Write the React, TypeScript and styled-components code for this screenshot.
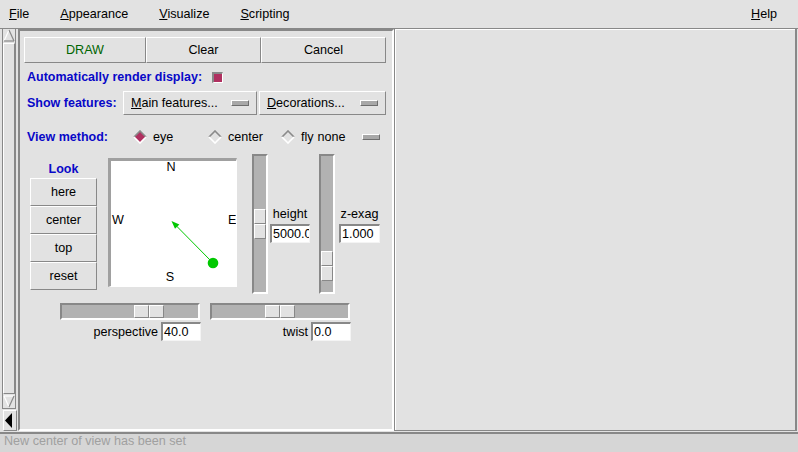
import React from "react";
import styled, { createGlobalStyle } from "styled-components";

const C = {
  bg: "#e2e2e2",
  dark: "#888888",
  light: "#ffffff",
  trough: "#b2b2b2",
  blue: "#0808c8",
  green: "#006400",
  select: "#b03060",
  status: "#d6d6d6",
  statusText: "#a0a0a0",
};

const Global = createGlobalStyle`
  *, *::before, *::after { box-sizing: border-box; }
  html, body { margin: 0; padding: 0; background: ${C.bg}; }
  body {
    font-family: "Liberation Sans", Arial, sans-serif;
    font-size: 12.6px;
    color: #000;
  }
`;

const Window = styled.div`
  width: 798px;
  height: 452px;
  display: flex;
  flex-direction: column;
  background: ${C.bg};
  overflow: hidden;
`;

const MenuBar = styled.div`
  height: 29px;
  flex: none;
  display: flex;
  align-items: center;
  border-bottom: 1px solid ${C.dark};
  padding: 0 21px 0 9px;
`;

const MenuItem = styled.span<{ $right?: boolean }>`
  margin-right: ${(p) => (p.$right ? "0" : "31px")};
  margin-left: ${(p) => (p.$right ? "auto" : "0")};
  white-space: nowrap;
`;

const Main = styled.div`
  height: 405px;
  flex: none;
  display: flex;
  border-bottom: 2px solid ${C.dark};
`;

const ScrollCol = styled.div`
  width: 18px;
  flex: none;
  display: flex;
  flex-direction: column;
`;

const Scrollbar = styled.div`
  width: 14px;
  height: 380px;
  margin-left: 2px;
  display: flex;
  flex-direction: column;
  border-left: 1px solid ${C.dark};
  border-right: 1px solid ${C.dark};
  border-bottom: 1px solid ${C.dark};
`;

const ScrollThumb = styled.div`
  flex: 1;
  margin: 1px 0;
  border-top: 1px solid ${C.light};
  border-left: 1px solid ${C.light};
  border-bottom: 1px solid ${C.dark};
  border-right: 1px solid ${C.dark};
`;

const ArrowBox = styled.div`
  height: 13px;
  display: flex;
  justify-content: center;
`;

const HideButton = styled.div`
  width: 14px;
  height: 21px;
  margin: 1px 0 0 3px;
  border-top: 1px solid ${C.light};
  border-left: 1px solid ${C.light};
  border-bottom: 1px solid ${C.dark};
  border-right: 1px solid ${C.dark};
  display: flex;
  align-items: center;
`;

const LeftPanel = styled.div`
  width: 376px;
  height: 402px;
  flex: none;
  display: flex;
  flex-direction: column;
  border-top: 2px solid ${C.dark};
  border-left: 2px solid ${C.dark};
  border-bottom: 2px solid ${C.light};
  border-right: 2px solid ${C.light};
`;

const RightPanel = styled.div`
  width: 403px;
  height: 402px;
  flex: none;
  border-left: 1px solid ${C.dark};
  border-right: 2px solid ${C.dark};
  border-bottom: 1px solid ${C.dark};
  box-shadow: inset 1px 1px 0 ${C.light};
`;

const ButtonRow = styled.div`
  display: flex;
  height: 26px;
  margin: 6px 0 0 4px;
`;

const PushButton = styled.div<{ $w: number; $color?: string }>`
  width: ${(p) => p.$w}px;
  height: 100%;
  display: flex;
  align-items: center;
  justify-content: center;
  color: ${(p) => p.$color || "#000"};
  border-top: 1px solid ${C.light};
  border-left: 1px solid ${C.light};
  border-bottom: 1px solid ${C.dark};
  border-right: 1px solid ${C.dark};
`;

const Row = styled.div<{ $h: number; $mt?: number }>`
  display: flex;
  align-items: center;
  height: ${(p) => p.$h}px;
  margin: ${(p) => p.$mt || 0}px 0 0 7px;
`;

const BlueLabel = styled.span<{ $w?: number }>`
  color: ${C.blue};
  font-weight: bold;
  font-size: 12.5px;
  white-space: nowrap;
  ${(p) => (p.$w ? `width: ${p.$w}px; flex: none;` : "")}
`;

const CheckBox = styled.span`
  width: 11px;
  height: 11px;
  margin-left: 10px;
  margin-top: 1px;
  background: ${C.select};
  border-top: 2px solid ${C.dark};
  border-left: 2px solid ${C.dark};
  border-bottom: 1px solid ${C.light};
  border-right: 1px solid ${C.light};
`;

const MenuButton = styled.div<{ $w: number; $ml?: number }>`
  width: ${(p) => p.$w}px;
  height: 24px;
  margin-left: ${(p) => p.$ml || 0}px;
  display: flex;
  align-items: center;
  justify-content: space-between;
  padding: 0 7px;
  border-top: 1px solid ${C.light};
  border-left: 1px solid ${C.light};
  border-bottom: 1px solid ${C.dark};
  border-right: 1px solid ${C.dark};
  white-space: nowrap;
`;

const Indicator = styled.span<{ $ml?: number }>`
  width: 18px;
  height: 6px;
  flex: none;
  margin-left: ${(p) => p.$ml || 0}px;
  background: #a8a8a8;
  border-top: 1px solid ${C.light};
  border-left: 1px solid ${C.light};
  border-bottom: 1px solid #6e6e6e;
  border-right: 1px solid #6e6e6e;
`;

const Radio = styled.label<{ $w?: number }>`
  display: flex;
  align-items: center;
  gap: 6px;
  ${(p) => (p.$w ? `width: ${p.$w}px;` : "")}
  flex: none;
  white-space: nowrap;
`;

const Plain = styled.span<{ $ml?: number }>`
  margin-left: ${(p) => p.$ml || 0}px;
  white-space: nowrap;
`;

const MainArea = styled.div`
  display: flex;
  align-items: flex-start;
  height: 141px;
  margin-top: 2px;
  padding-left: 10px;
`;

const LookCol = styled.div`
  width: 67px;
  margin-top: 5px;
  display: flex;
  flex-direction: column;
`;

const LookTitle = styled.div`
  height: 19px;
  display: flex;
  align-items: center;
  justify-content: center;
  color: ${C.blue};
  font-weight: bold;
  font-size: 12.5px;
`;

const LookButton = styled.div`
  height: 28px;
  display: flex;
  align-items: center;
  justify-content: center;
  border-top: 1px solid ${C.light};
  border-left: 1px solid ${C.light};
  border-bottom: 1px solid ${C.dark};
  border-right: 1px solid ${C.dark};
`;

const Compass = styled.div`
  width: 129px;
  height: 129px;
  margin: 4px 0 0 11px;
  background: #fff;
  border-top: 3px solid #a0a0a0;
  border-left: 3px solid #a0a0a0;
  border-bottom: 1px solid #fff;
  border-right: 1px solid #fff;
`;

const VTrough = styled.div<{ $ml: number }>`
  width: 16px;
  height: 140px;
  margin-left: ${(p) => p.$ml}px;
  flex: none;
  background: ${C.trough};
  border-top: 2px solid ${C.dark};
  border-left: 2px solid ${C.dark};
  border-bottom: 2px solid ${C.light};
  border-right: 2px solid ${C.light};
  display: flex;
  flex-direction: column;
`;

const HTrough = styled.div`
  width: 140px;
  height: 17px;
  background: ${C.trough};
  border-top: 2px solid ${C.dark};
  border-left: 2px solid ${C.dark};
  border-bottom: 2px solid ${C.light};
  border-right: 2px solid ${C.light};
  display: flex;
`;

const ThumbHalf = styled.div<{ $vertical?: boolean }>`
  ${(p) => (p.$vertical ? "height: 15px; width: 100%;" : "width: 15px; height: 100%;")}
  background: ${C.bg};
  border-top: 1px solid ${C.light};
  border-left: 1px solid ${C.light};
  border-bottom: 1px solid ${C.dark};
  border-right: 1px solid ${C.dark};
  flex: none;
`;

const VThumb = styled.div<{ $pos: number }>`
  margin-top: ${(p) => p.$pos}px;
  display: flex;
  flex-direction: column;
`;

const HThumb = styled.div<{ $pos: number }>`
  margin-left: ${(p) => p.$pos}px;
  display: flex;
`;

const ValueCol = styled.div<{ $ml: number; $w: number }>`
  width: ${(p) => p.$w}px;
  margin: 52px 0 0 ${(p) => p.$ml}px;
  display: flex;
  flex-direction: column;
  align-items: center;
`;

const ValueLabel = styled.div`
  height: 16px;
  line-height: 16px;
  margin-bottom: 2px;
  white-space: nowrap;
`;

const Entry = styled.div<{ $w: number }>`
  width: ${(p) => p.$w}px;
  height: 19px;
  flex: none;
  background: #fff;
  border-top: 2px solid ${C.dark};
  border-left: 2px solid ${C.dark};
  border-bottom: 1px solid #f4f4f4;
  border-right: 1px solid #f4f4f4;
  padding-left: 1px;
  line-height: 16px;
  white-space: nowrap;
  overflow: hidden;
`;

const BottomArea = styled.div`
  display: flex;
  gap: 9px;
  margin-top: 8px;
  padding-left: 40px;
`;

const SliderCol = styled.div`
  width: 141px;
  display: flex;
  flex-direction: column;
`;

const SliderLabelRow = styled.div`
  display: flex;
  justify-content: flex-end;
  align-items: center;
  gap: 3px;
  margin-top: 2px;
`;

const StatusBar = styled.div`
  flex: 1;
  background: ${C.status};
  color: ${C.statusText};
  padding-left: 4px;
  line-height: 15px;
  white-space: nowrap;
`;

function Diamond({ on }: { on?: boolean }) {
  return (
    <svg width="14" height="14" viewBox="0 0 14 14">
      <polygon points="7,1 13,7 7,13 1,7" fill={on ? C.select : C.bg} />
      <polyline points="1,7 7,1 13,7" stroke="#8a8a8a" strokeWidth="1.6" fill="none" />
      <polyline points="1,7 7,13 13,7" stroke="#fff" strokeWidth="1.6" fill="none" />
    </svg>
  );
}

function UpArrow() {
  return (
    <svg width="12" height="13" viewBox="0 0 12 13">
      <polygon points="6,1 11,12 1,12" fill={C.bg} />
      <line x1="6" y1="1" x2="1" y2="12" stroke="#fff" strokeWidth="1.2" />
      <line x1="6" y1="1" x2="11" y2="12" stroke="#888" strokeWidth="1.2" />
      <line x1="1" y1="12" x2="11" y2="12" stroke="#888" strokeWidth="1.2" />
    </svg>
  );
}

function DownArrow() {
  return (
    <svg width="12" height="13" viewBox="0 0 12 13">
      <polygon points="1,1 11,1 6,12" fill={C.bg} />
      <line x1="1" y1="1" x2="11" y2="1" stroke="#fff" strokeWidth="1.2" />
      <line x1="1" y1="1" x2="6" y2="12" stroke="#fff" strokeWidth="1.2" />
      <line x1="11" y1="1" x2="6" y2="12" stroke="#888" strokeWidth="1.2" />
    </svg>
  );
}

function VSlider({ pos, ml }: { pos: number; ml: number }) {
  return (
    <VTrough $ml={ml}>
      <VThumb $pos={pos}>
        <ThumbHalf $vertical />
        <ThumbHalf $vertical />
      </VThumb>
    </VTrough>
  );
}

function HSlider({ pos }: { pos: number }) {
  return (
    <HTrough>
      <HThumb $pos={pos}>
        <ThumbHalf />
        <ThumbHalf />
      </HThumb>
    </HTrough>
  );
}

function CompassDrawing() {
  const txt = { fontFamily: "'Liberation Sans', Arial, sans-serif", fontSize: 12.6 } as const;
  return (
    <svg width="125" height="125" viewBox="0 0 125 125">
      <text x="60" y="10" textAnchor="middle" style={txt}>N</text>
      <text x="1" y="63" style={txt}>W</text>
      <text x="117" y="63" style={txt}>E</text>
      <text x="59" y="120" textAnchor="middle" style={txt}>S</text>
      <line x1="102" y1="102" x2="65" y2="64.5" stroke="#00c800" strokeWidth="1" />
      <polygon points="60.5,60 68.4,63.4 64,67.8" fill="#00c800" />
      <circle cx="102" cy="102" r="5.3" fill="#00c800" />
    </svg>
  );
}

export default function App() {
  return (
    <>
      <Global />
      <Window>
        <MenuBar>
          <MenuItem><u>F</u>ile</MenuItem>
          <MenuItem><u>A</u>ppearance</MenuItem>
          <MenuItem><u>V</u>isualize</MenuItem>
          <MenuItem><u>S</u>cripting</MenuItem>
          <MenuItem $right><u>H</u>elp</MenuItem>
        </MenuBar>
        <Main>
          <ScrollCol>
            <Scrollbar>
              <ArrowBox><UpArrow /></ArrowBox>
              <ScrollThumb />
              <ArrowBox><DownArrow /></ArrowBox>
            </Scrollbar>
            <HideButton>
              <svg width="12" height="19" viewBox="0 0 12 19">
                <polygon points="1,9.5 8,2 8,17" fill="#000" />
              </svg>
            </HideButton>
          </ScrollCol>
          <LeftPanel>
            <ButtonRow>
              <PushButton $w={122} $color={C.green}>DRAW</PushButton>
              <PushButton $w={115}>Clear</PushButton>
              <PushButton $w={125}>Cancel</PushButton>
            </ButtonRow>
            <Row $h={28}>
              <BlueLabel>Automatically render display:</BlueLabel>
              <CheckBox />
            </Row>
            <Row $h={24}>
              <BlueLabel $w={96}>Show features:</BlueLabel>
              <MenuButton $w={134}>
                <span><u>M</u>ain features...</span>
                <Indicator />
              </MenuButton>
              <MenuButton $w={127} $ml={2}>
                <span><u>D</u>ecorations...</span>
                <Indicator />
              </MenuButton>
            </Row>
            <Row $h={30} $mt={7}>
              <BlueLabel $w={106}>View method:</BlueLabel>
              <Radio $w={75}><Diamond on /><span>eye</span></Radio>
              <Radio $w={73}><Diamond /><span>center</span></Radio>
              <Radio><Diamond /><span>fly</span></Radio>
              <Plain $ml={4}>none</Plain>
              <Indicator $ml={16} />
            </Row>
            <MainArea>
              <LookCol>
                <LookTitle>Look</LookTitle>
                <LookButton>here</LookButton>
                <LookButton>center</LookButton>
                <LookButton>top</LookButton>
                <LookButton>reset</LookButton>
              </LookCol>
              <Compass>
                <CompassDrawing />
              </Compass>
              <VSlider pos={53} ml={15} />
              <ValueCol $ml={2} $w={40}>
                <ValueLabel>height</ValueLabel>
                <Entry $w={40}>5000.0</Entry>
              </ValueCol>
              <VSlider pos={95} ml={9} />
              <ValueCol $ml={4} $w={41}>
                <ValueLabel>z-exag</ValueLabel>
                <Entry $w={41}>1.000</Entry>
              </ValueCol>
            </MainArea>
            <BottomArea>
              <SliderCol>
                <HSlider pos={72} />
                <SliderLabelRow>
                  <span>perspective</span>
                  <Entry $w={40}>40.0</Entry>
                </SliderLabelRow>
              </SliderCol>
              <SliderCol>
                <HSlider pos={53} />
                <SliderLabelRow>
                  <span>twist</span>
                  <Entry $w={40}>0.0</Entry>
                </SliderLabelRow>
              </SliderCol>
            </BottomArea>
          </LeftPanel>
          <RightPanel />
        </Main>
        <StatusBar>New center of view has been set</StatusBar>
      </Window>
    </>
  );
}
